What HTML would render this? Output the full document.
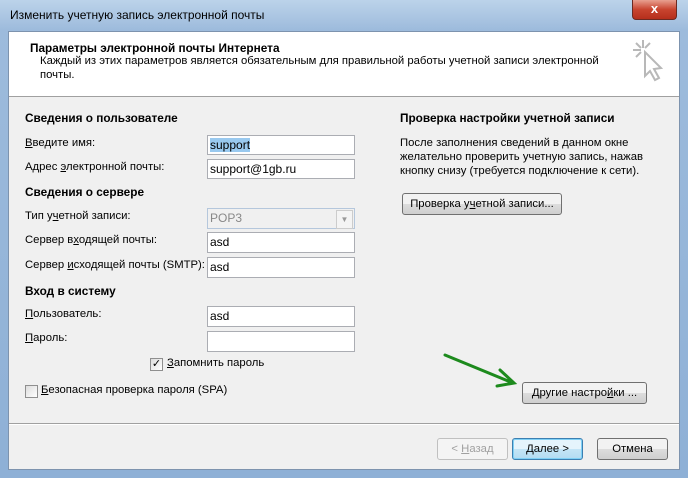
<!DOCTYPE html><html><head><meta charset="utf-8"><style>
body{margin:0;width:688px;height:478px;overflow:hidden;font-family:"Liberation Sans",sans-serif;font-size:11.3px;color:#000}
.win{position:absolute;left:0;top:0;width:688px;height:478px;background:linear-gradient(#bcd3ea,#9dbbdc 30px,#8eb0d6);}
.t{position:absolute;white-space:nowrap}
.client{position:absolute;left:8px;top:31px;width:672px;height:439px;background:#f0f0f0;border:1px solid #7d93ae;box-sizing:border-box}
.hdr{position:absolute;left:0;top:0;width:670px;height:64px;background:#fff;border-bottom:1px solid #a0a0a0}
.in{position:absolute;background:#fff;border:1px solid #abadb3;height:20px;box-sizing:border-box;padding:2px 2px;font-size:12px}
.btn{position:absolute;height:22px;box-sizing:border-box;border:1px solid #707070;border-radius:3px;background:linear-gradient(#f2f2f2 50%,#dddddd 50%,#cfcfcf);text-align:center;line-height:20px}
.b{font-weight:bold;font-size:11.8px}
.cb{position:absolute;width:11px;height:11px;border:1px solid #8f8f8f;background:linear-gradient(135deg,#ddd,#fff)}
u{text-decoration:underline}
</style></head><body><div class="win">
<div class="t" style="left:10px;top:8px;font-size:12px">Изменить учетную запись электронной почты</div>
<div style="position:absolute;left:632px;top:0;width:45px;height:20px;border:1px solid #6b2a22;border-top:none;border-radius:0 0 4px 4px;background:linear-gradient(#e8a090,#c8442f 50%,#b52f1c);box-sizing:border-box;color:#fff;font-weight:bold;text-align:center;line-height:18px;font-size:13px">x</div>
<div class="client">
<div class="hdr">
<div class="t b" style="left:21px;top:9px">Параметры электронной почты Интернета</div>
<div class="t" style="left:31px;top:23px">Каждый из этих параметров является обязательным для правильной работы учетной записи электронной</div>
<div class="t" style="left:31px;top:37px">почты.</div>
<svg style="position:absolute;left:622px;top:6px" width="36" height="46" viewBox="0 0 36 46"><g stroke="#b8b8b8" stroke-width="2" fill="none"><path d="M12 2v8M2 12h8M5 5l5 5M19 5l-5 5M5 19l5-5"/><path d="M14 14l0 24 5-5 5 9 4-2-5-9 7-1z" fill="#fff"/></g></svg>
</div>
</div>
<div class="t b" style="left:25px;top:111px">Сведения о пользователе</div>
<div class="t" style="left:25px;top:137px"><u>В</u>ведите имя:</div>
<div class="in" style="left:207px;top:135px;width:148px"><span style="background:#99c9ef">support</span></div>
<div class="t" style="left:25px;top:161px">Адрес <u>э</u>лектронной почты:</div>
<div class="in" style="left:207px;top:159px;width:148px">support@1gb.ru</div>
<div class="t b" style="left:25px;top:185px">Сведения о сервере</div>
<div class="t" style="left:25px;top:210px">Тип у<u>ч</u>етной записи:</div>
<div class="in" style="left:207px;top:208px;width:148px;height:21px;background:#f0f0f0;color:#888;border-color:#b5c7dc">POP3<div style="position:absolute;right:1px;top:1px;width:15px;height:17px;border:1px solid #ccc;background:#f4f4f4;color:#999;font-size:8px;line-height:17px;text-align:center">▼</div></div>
<div class="t" style="left:25px;top:234px">Сервер в<u>х</u>одящей почты:</div>
<div class="in" style="left:207px;top:232px;width:148px;height:21px">asd</div>
<div class="t" style="left:25px;top:259px">Сервер <u>и</u>сходящей почты (SMTP):</div>
<div class="in" style="left:207px;top:257px;width:148px;height:21px">asd</div>
<div class="t b" style="left:25px;top:284px">Вход в систему</div>
<div class="t" style="left:25px;top:308px"><u>П</u>ользователь:</div>
<div class="in" style="left:207px;top:306px;width:148px;height:21px">asd</div>
<div class="t" style="left:25px;top:332px"><u>П</u>ароль:</div>
<div class="in" style="left:207px;top:331px;width:148px;height:21px"></div>
<div class="cb" style="left:150px;top:358px;font-size:11px;line-height:11px;text-align:center">✓</div>
<div class="t" style="left:167px;top:357px"><u>З</u>апомнить пароль</div>
<div class="cb" style="left:25px;top:385px"></div>
<div class="t" style="left:41px;top:384px"><u>Б</u>езопасная проверка пароля (SPA)</div>
<div class="t b" style="left:400px;top:111px">Проверка настройки учетной записи</div>
<div class="t" style="left:400px;top:136px;line-height:14px">После заполнения сведений в данном окне<br>желательно проверить учетную запись, нажав<br>кнопку снизу (требуется подключение к сети).</div>
<div class="btn" style="left:402px;top:193px;width:160px">Проверка у<u>ч</u>етной записи...</div>
<div class="btn" style="left:522px;top:382px;width:125px">Другие настро<u>й</u>ки ...</div>
<svg style="position:absolute;left:440px;top:350px" width="85" height="42"><g stroke="#1d8a1d" stroke-width="3" fill="none" stroke-linecap="round"><path d="M5 5L73 33M60 20L74 33 57 36"/></g></svg>
<div style="position:absolute;left:9px;top:423px;width:670px;border-top:1px solid #a0a0a0;border-bottom:1px solid #fff"></div>
<div class="btn" style="left:437px;top:438px;width:71px;color:#a0a0a0;border-color:#c0c0c0;background:#f4f4f4">&lt; <u>Н</u>азад</div>
<div class="btn" style="left:512px;top:438px;width:71px;border-color:#3c7fb1;background:linear-gradient(#e5f4fc 50%,#c4e5f6 50%,#b3dcf2);box-shadow:inset 0 0 0 1px #7fd0f5"><u>Д</u>алее &gt;</div>
<div class="btn" style="left:597px;top:438px;width:71px">Отмена</div>
</div></body></html>
